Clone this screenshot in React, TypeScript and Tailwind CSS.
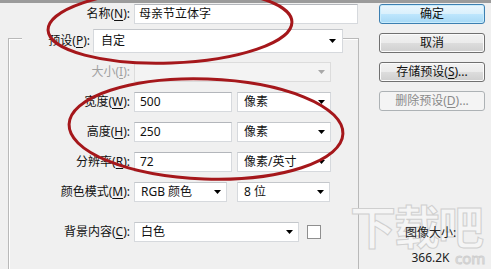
import type { ReactNode } from "react";

function Arrow({ disabled = false }: { disabled?: boolean }) {
  return (
    <svg width="7" height="4" viewBox="0 0 7 4" className="absolute right-[5px] top-1/2 -translate-y-1/2">
      <polygon points="0,0 7,0 3.5,4" fill={disabled ? "#a8a8a8" : "#000"} />
    </svg>
  );
}

function U({ children }: { children: ReactNode }) {
  return <span className="underline underline-offset-[2px] decoration-1">{children}</span>;
}

function Label({ children, disabled = false }: { children: ReactNode; disabled?: boolean }) {
  return (
    <div className={`w-[125px] pr-[4px] text-right ${disabled ? "text-[#a0a0a0]" : "text-[#111]"}`}>
      {children}
    </div>
  );
}

function TextBox({ value, width }: { value: string; width: string }) {
  return (
    <div className={`${width} h-[20px] flex items-center pl-[5px] bg-white border border-[#d6d9dd] border-t-[#b3b6bb]`}>
      {value}
    </div>
  );
}

function Combo({ value, width, disabled = false }: { value?: string; width: string; disabled?: boolean }) {
  return (
    <div
      className={`relative ${width} h-[20px] flex items-center pl-[6px] border ${
        disabled ? "bg-[#f3f3f3] border-[#dcdcdc]" : "bg-white border-[#d6d9dd] border-t-[#c4c7cb]"
      }`}
    >
      {value}
      <Arrow disabled={disabled} />
    </div>
  );
}

function Btn({ children, kind = "normal" }: { children: ReactNode; kind?: "default" | "normal" | "disabled" }) {
  const style =
    kind === "default"
      ? "border-[#3c7fb1] bg-[linear-gradient(#eaf6fd_0%,#d9f0fc_50%,#bee6fd_50%,#a7d9f5_100%)] shadow-[inset_0_0_0_1px_#c9ecfc]"
      : kind === "disabled"
      ? "border-[#adb2b5] bg-[#f4f4f4] text-[#8a8a8a]"
      : "border-[#707070] bg-[linear-gradient(#f2f2f2_0%,#ebebeb_50%,#dddddd_50%,#cfcfcf_100%)] shadow-[inset_0_0_0_1px_#fbfbfb]";
  return (
    <div className={`h-[20px] w-[106px] flex items-center justify-center rounded-[3px] border ${style}`}>
      {children}
    </div>
  );
}

export default function App() {
  return (
    <div className="relative w-[491px] h-[269px] overflow-hidden bg-[#f0f0f0] text-[12px] leading-[16px] text-[#111] font-['Noto_Sans','Noto_Sans_CJK_SC',sans-serif]">
      <div className="h-[3px] bg-[#9b9b9b]" />

      {/* watermark */}
      <div className="absolute left-[350px] top-[196px] text-[46px] leading-[60px] font-bold tracking-[-2px] text-[#f5f5f5] [-webkit-text-stroke:1px_#cfcfcf]">
        下载吧
      </div>
      <div className="absolute left-[455px] top-[249px] text-[15px] leading-[18px] text-[#f5f5f5] [-webkit-text-stroke:1px_#cfcfcf]">
        com
      </div>

      <div className="flex">
        <div className="w-[370px]">
          <div className="mt-[1px] flex items-center h-[20px]">
            <div className="w-[134px] pr-[4px] text-right">
              名称(<U>N</U>):
            </div>
            <div className="w-[224px] h-[20px] flex items-center pl-[4px] bg-white border border-[#d6d9dd] border-t-[#b3b6bb]">
              母亲节立体字
            </div>
          </div>

          <div className="relative z-10 mt-[5px] flex items-center h-[24px]">
            <div className="ml-[22px] w-[71px] pr-[3px] text-right bg-[#f0f0f0] leading-[24px]">
              预设(<U>P</U>):
            </div>
            <div className="relative w-[250px] h-[24px] flex items-center pl-[7px] bg-white border border-[#d6d9dd] border-t-[#c4c7cb]">
              自定
              <svg width="7" height="4" viewBox="0 0 7 4" className="absolute right-[6px] top-1/2 -translate-y-1/2">
                <polygon points="0,0 7,0 3.5,4" fill="#000" />
              </svg>
            </div>
          </div>

          <div className="mt-[-15px] ml-[8px] w-[351px] h-[260px] border-l border-t border-r border-[#b9b9b9] shadow-[inset_1px_1px_0_#ffffff] pt-[23px]">
            <div className="flex flex-col gap-[10px]">
              <div className="flex items-center">
                <Label disabled>
                  大小(<U>I</U>):
                </Label>
                <Combo width="w-[197px]" disabled />
              </div>
              <div className="flex items-center">
                <Label>
                  宽度(<U>W</U>):
                </Label>
                <TextBox value="500" width="w-[98px]" />
                <div className="ml-[5px]">
                  <Combo value="像素" width="w-[94px]" />
                </div>
              </div>
              <div className="flex items-center">
                <Label>
                  高度(<U>H</U>):
                </Label>
                <TextBox value="250" width="w-[98px]" />
                <div className="ml-[5px]">
                  <Combo value="像素" width="w-[94px]" />
                </div>
              </div>
              <div className="flex items-center">
                <Label>
                  分辨率(<U>R</U>):
                </Label>
                <TextBox value="72" width="w-[98px]" />
                <div className="ml-[5px]">
                  <Combo value="像素/英寸" width="w-[94px]" />
                </div>
              </div>
              <div className="flex items-center">
                <Label>
                  颜色模式(<U>M</U>):
                </Label>
                <Combo value="RGB 颜色" width="w-[93px]" />
                <div className="ml-[10px]">
                  <Combo value="8 位" width="w-[93px]" />
                </div>
              </div>
              <div className="mt-[10px] flex items-center">
                <Label>
                  背景内容(<U>C</U>):
                </Label>
                <Combo value="白色" width="w-[165px]" />
                <div className="ml-[8px] w-[14px] h-[14px] bg-white border border-[#8f8f8f]" />
              </div>
            </div>
          </div>
        </div>

        <div className="flex-1 flex flex-col">
          <div className="ml-[9px] mt-[1px] flex flex-col gap-[9px]">
            <Btn kind="default">确定</Btn>
            <Btn>取消</Btn>
            <Btn>
              存储预设(<U>S</U>)...
            </Btn>
            <Btn kind="disabled">
              删除预设(<U>D</U>)...
            </Btn>
          </div>
          <div className="relative z-10 mt-[114px] flex flex-col items-center text-[#222]">
            <div>图像大小:</div>
            <div className="mt-[9px]">366.2K</div>
          </div>
        </div>
      </div>

      <svg width="491" height="269" className="absolute inset-0 pointer-events-none z-20">
        <ellipse cx="170" cy="26" rx="122" ry="37" fill="none" stroke="#a5171b" strokeWidth="3" transform="rotate(-2 170 26)" />
        <ellipse cx="206" cy="129" rx="137" ry="50" fill="none" stroke="#a5171b" strokeWidth="3" transform="rotate(2 206 129)" />
      </svg>
    </div>
  );
}
